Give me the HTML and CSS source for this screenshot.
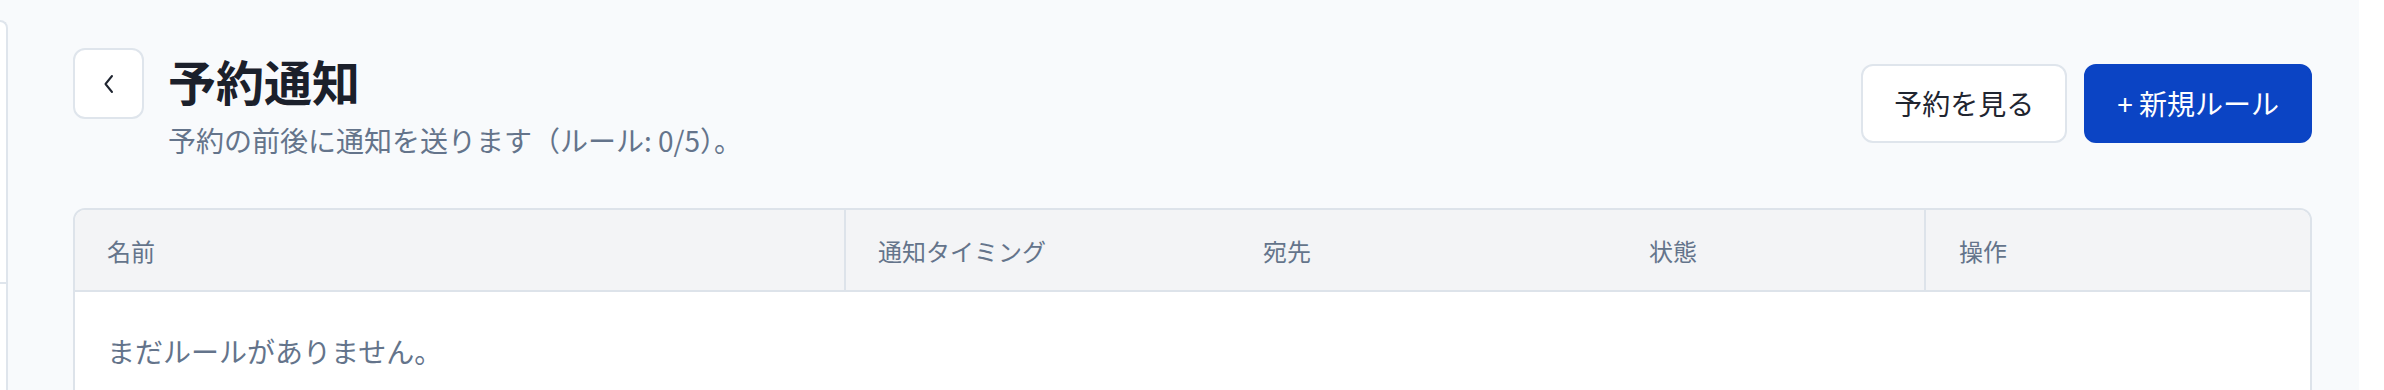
FILE: index.html
```html
<!DOCTYPE html>
<html lang="ja">
<head>
<meta charset="utf-8">
<title>予約通知</title>
<link rel="stylesheet" href="styles.css">
</head>
<body>
<div class="app">
  <aside class="sidebar"><div class="sidebar-divider"></div></aside>
  <main class="main">
    <header class="page-header">
      <div class="title-group">
        <button class="back-btn" aria-label="戻る">
          <svg width="14" height="22" viewBox="0 0 14 22" fill="none"><path d="M10 3 L3.5 11 L10 19" stroke="#1f2530" stroke-width="2" stroke-linecap="round" stroke-linejoin="round"/></svg>
        </button>
        <div class="title-block">
          <h1 class="title">予約通知</h1>
          <p class="subtitle">予約の前後に通知を送ります（ルール: 0/5）。</p>
        </div>
      </div>
      <div class="actions">
        <button class="btn btn-outline">予約を見る</button>
        <button class="btn btn-primary">+ 新規ルール</button>
      </div>
    </header>
    <section class="table-card">
      <div class="thead">
        <div class="th th-name">名前</div>
        <div class="th">通知タイミング</div>
        <div class="th">宛先</div>
        <div class="th">状態</div>
        <div class="th th-ops">操作</div>
      </div>
      <div class="tbody">
        <p class="empty">まだルールがありません。</p>
      </div>
    </section>
  </main>
  <div class="gutter"></div>
</div>
</body>
</html>
```

FILE: styles.css
```css
* { box-sizing: border-box; margin: 0; padding: 0; }
html, body { height: 100%; }
body {
  font-family: "Noto Sans CJK JP", "Noto Sans", sans-serif;
  background: #f8fafc;
  overflow: hidden;
}
.app { display: flex; min-height: 100vh; }
.sidebar {
  width: 8px;
  margin-top: 20px;
  background: #ffffff;
  border-top: 2px solid #dfe5ec;
  border-right: 2px solid #dfe5ec;
  border-top-right-radius: 14px;
}
.sidebar-divider { margin-top: 260px; border-bottom: 2px solid #dfe5ec; }
.main {
  flex: 1;
  background: #f8fafc;
  padding: 48px 47px 0 65px;
  min-width: 0;
}
.gutter { width: 25px; background: #ffffff; }

.page-header {
  display: flex;
  justify-content: space-between;
  align-items: center;
  margin-bottom: 50px;
}
.title-group { display: flex; align-items: flex-start; gap: 24px; }
.back-btn {
  width: 71px; height: 71px;
  background: #ffffff;
  border: 2px solid #dfe5ec;
  border-radius: 12px;
  display: flex; align-items: center; justify-content: center;
}
.title {
  font-size: 48px;
  font-weight: 700;
  line-height: 64px;
  color: #1b202b;
}
.subtitle {
  margin-top: 10px;
  font-size: 28px;
  line-height: 36px;
  color: #64748b;
}
.actions { display: flex; gap: 17px; }
.btn {
  height: 79px;
  padding: 0 31px;
  font-family: inherit;
  font-size: 28px;
  border-radius: 12px;
  display: flex; align-items: center;
}
.btn-outline { background: #ffffff; border: 2px solid #dfe5ec; color: #1f2530; }
.btn-primary { background: #0b44c4; border: 2px solid #0b44c4; color: #ffffff; }

.table-card {
  background: #ffffff;
  border: 2px solid #dde3ea;
  border-radius: 12px;
  overflow: hidden;
}
.thead {
  display: grid;
  grid-template-columns: 771px 385px 386px 307px 1fr;
  height: 82px;
  background: #f3f4f6;
  border-bottom: 2px solid #dde3ea;
}
.th {
  display: flex; align-items: center;
  padding-left: 32px;
  font-size: 24px;
  color: #64748b;
}
.th-name { border-right: 2px solid #dde3ea; }
.th-ops { border-left: 2px solid #dde3ea; padding-left: 33px; }
.empty {
  padding: 38px 32px;
  font-size: 28px;
  line-height: 42px;
  color: #64748b;
}
```
